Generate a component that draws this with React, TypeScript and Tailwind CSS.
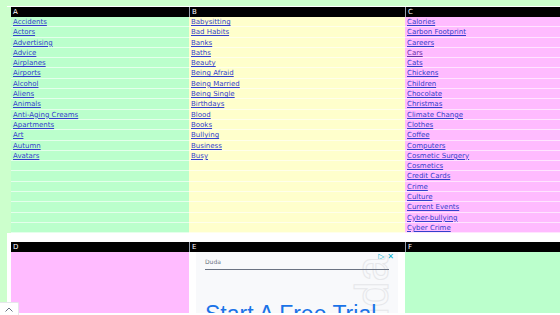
const colA = [
  "Accidents",
  "Actors",
  "Advertising",
  "Advice",
  "Airplanes",
  "Airports",
  "Alcohol",
  "Aliens",
  "Animals",
  "Anti-Aging Creams",
  "Apartments",
  "Art",
  "Autumn",
  "Avatars",
];

const colB = [
  "Babysitting",
  "Bad Habits",
  "Banks",
  "Baths",
  "Beauty",
  "Being Afraid",
  "Being Married",
  "Being Single",
  "Birthdays",
  "Blood",
  "Books",
  "Bullying",
  "Business",
  "Busy",
];

const colC = [
  "Calories",
  "Carbon Footprint",
  "Careers",
  "Cars",
  "Cats",
  "Chickens",
  "Children",
  "Chocolate",
  "Christmas",
  "Climate Change",
  "Clothes",
  "Coffee",
  "Computers",
  "Cosmetic Surgery",
  "Cosmetics",
  "Credit Cards",
  "Crime",
  "Culture",
  "Current Events",
  "Cyber-bullying",
  "Cyber Crime",
];

const visited = ["Cars"];

function Cell({ text, bg }: { text?: string; bg: string }) {
  return (
    <div className={`h-[10.3px] border-b border-white/60 pl-[2px] leading-[10px] ${bg}`}>
      {text && (
        <a
          href="#"
          className={`underline ${visited.includes(text) ? "text-[#6633aa]" : "text-[#3340cc]"}`}
        >
          {text}
        </a>
      )}
    </div>
  );
}

function HeaderRow({ letters }: { letters: string[] }) {
  return (
    <div className="grid grid-cols-[178px_216px_1fr] h-[10px] bg-black text-white leading-[10px]">
      {letters.map((l, i) => (
        <div key={l} className={`pl-[2px] ${i > 0 ? "border-l border-gray-400" : ""}`}>
          {l}
        </div>
      ))}
    </div>
  );
}

export default function App() {
  const rows = Array.from({ length: 21 }, (_, i) => i);

  return (
    <div
      className="relative w-[560px] h-[315px] overflow-hidden bg-[#ccffcc] pt-[6px] text-[7px]"
      style={{ fontFamily: '"DejaVu Sans", Verdana, sans-serif' }}
    >
      <div className="ml-[7px] h-full bg-white pt-[1px]">
        {/* first block A B C */}
        <div className="bg-[#ccffcc] pl-[4px]">
          <HeaderRow letters={["A", "B", "C"]} />
          <div className="grid grid-cols-[178px_216px_1fr]">
            <div className="flex flex-col">
              {rows.map((i) => (
                <Cell key={i} text={colA[i]} bg="bg-[#bbffcc]" />
              ))}
            </div>
            <div className="flex flex-col">
              {rows.map((i) => (
                <Cell key={i} text={colB[i]} bg="bg-[#ffffcc]" />
              ))}
            </div>
            <div className="flex flex-col">
              {rows.map((i) => (
                <Cell key={i} text={colC[i]} bg="bg-[#ffbbff]" />
              ))}
            </div>
          </div>
        </div>

        {/* second block D E F */}
        <div className="mt-[9px] pl-[4px]">
          <HeaderRow letters={["D", "E", "F"]} />
          <div className="grid grid-cols-[178px_216px_1fr] h-[61px]">
            <div className="bg-[#ffbbff]" />
            <div className="bg-white px-[7px] overflow-hidden">
              <div className="relative h-full bg-[#f8f9fb] px-[9px] pt-[5px] overflow-hidden">
                <div className="absolute right-[4px] top-[1px] flex items-center gap-[3px] text-[#00aecd] text-[8px] leading-none">
                  <span>▷</span>
                  <span>✕</span>
                </div>
                <div
                  className="absolute right-[6px] top-[4px] text-[46px] leading-[40px] text-transparent rotate-180"
                  style={{
                    fontFamily: '"Liberation Sans", Arial, sans-serif',
                    WebkitTextStroke: "1px #e6e7ea",
                    writingMode: "vertical-rl",
                  }}
                >
                  Duda
                </div>
                <div className="relative text-[6px] text-gray-500">Duda</div>
                <div className="relative mt-[3px] h-[1px] bg-gray-500" />
                <div
                  className="relative mt-[33px] text-[23px] leading-none whitespace-nowrap text-[#1a73e8]"
                  style={{ fontFamily: '"Liberation Sans", Arial, sans-serif' }}
                >
                  Start A Free Trial
                </div>
              </div>
            </div>
            <div className="bg-[#bbffcc]" />
          </div>
        </div>
      </div>

      <div className="absolute left-0 bottom-0 w-[19px] h-[13px] bg-white border-t border-r border-gray-200 rounded-tr-[2px] flex items-center justify-center text-gray-500">
        <svg width="8" height="5" viewBox="0 0 8 5" fill="none" stroke="currentColor" strokeWidth="1">
          <path d="M0.5 4.5 L4 1 L7.5 4.5" />
        </svg>
      </div>
    </div>
  );
}
